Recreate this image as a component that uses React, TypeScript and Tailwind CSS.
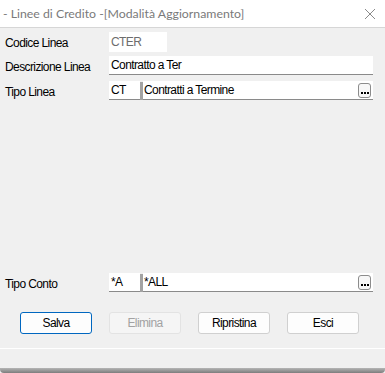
import React from "react";

function Dots() {
  return (
    <div className="w-[13px] h-[15px] rounded-[3px] border border-[#8c8c8c] bg-[#f7f7f7] flex items-end justify-center pb-[3px] gap-[1px]">
      <span className="w-[2px] h-[2px] bg-black" />
      <span className="w-[2px] h-[2px] bg-black" />
      <span className="w-[2px] h-[2px] bg-black" />
    </div>
  );
}

function Label({ children }: { children: React.ReactNode }) {
  return <div className="w-[109px] pl-[5px] pt-[2px] text-black">{children}</div>;
}

function LookupRow({ label, code, text, mt }: { label: string; code: string; text: string; mt: string }) {
  return (
    <div className={`flex items-center h-[19px] ${mt}`}>
      <Label>{label}</Label>
      <div className="w-[31px] h-[19px] bg-white border-b border-[#8a8a8a] pl-[2px] flex items-center">{code}</div>
      <div className="w-[3px] h-[18px] self-start mt-[1px] bg-[#a3a3a3]" />
      <div className="w-[230px] h-[19px] bg-white border-b border-[#8a8a8a] pl-[1px] pr-[2px] flex items-center justify-between">
        <span>{text}</span>
        <Dots />
      </div>
    </div>
  );
}

function Btn({ children, variant }: { children: React.ReactNode; variant: "primary" | "normal" | "disabled" }) {
  const cls =
    variant === "primary"
      ? "border-[#0067c0] bg-[#fdfdfd] text-black"
      : variant === "disabled"
      ? "border-[#e3e3e3] bg-[#f5f5f5] text-[#a2a2a2]"
      : "border-[#d0d0d0] bg-[#fdfdfd] text-black";
  return (
    <div className={`w-[72px] h-[22px] rounded-[3px] border flex items-center justify-center ${cls}`}>{children}</div>
  );
}

export default function App() {
  return (
    <div
      className="w-[385px] h-[373px] bg-[#f0f0f0] flex flex-col text-[12px] tracking-[-0.6px] leading-none overflow-hidden"
      style={{ fontFamily: '"Liberation Sans", Arial, sans-serif' }}
    >
      <div className="h-[28px] bg-white border-b border-[#d6d6d6] flex items-center justify-between pl-[3px] pr-[8px] shrink-0">
        <span
          className="text-[12.3px] text-[#7a7a7a] pt-[1px] tracking-normal"
          style={{ fontFamily: 'Lato, "Noto Sans", sans-serif' }}
        >
          - Linee di Credito -[Modalità Aggiornamento]
        </span>
        <svg width="12" height="12" viewBox="0 0 12 12" className="mr-[1px]">
          <path d="M1 1 L11 11 M11 1 L1 11" stroke="#8a8a8a" strokeWidth="1" fill="none" />
        </svg>
      </div>

      <div className="flex flex-col flex-1">
        <div className="flex items-center h-[20px] mt-[4px]">
          <Label>Codice Linea</Label>
          <div className="w-[58px] h-[20px] bg-white pl-[2px] flex items-center text-[#6d6d6d]">CTER</div>
        </div>

        <div className="flex items-center h-[19px] mt-[4px]">
          <Label>Descrizione Linea</Label>
          <div className="w-[264px] h-[19px] bg-white border-b border-[#8a8a8a] pl-[2px] flex items-center">Contratto a Ter</div>
        </div>

        <LookupRow label="Tipo Linea" code="CT" text="Contratti a Termine" mt="mt-[6px]" />

        <LookupRow label="Tipo Conto" code="*A" text="*ALL" mt="mt-[173px]" />

        <div className="flex mt-[20px] pl-[20px] gap-[17px]">
          <Btn variant="primary">Salva</Btn>
          <Btn variant="disabled">Elimina</Btn>
          <Btn variant="normal">Ripristina</Btn>
          <Btn variant="normal">Esci</Btn>
        </div>

        <div className="mt-[14px] h-[1px] bg-[#dadada] border-b border-white" />
        <div className="flex-1" />
      </div>
      <div className="h-[5px] shrink-0 bg-gradient-to-b from-[#b5b5b5] to-[#7d7d7d] rounded-b-[4px]" />
    </div>
  );
}
